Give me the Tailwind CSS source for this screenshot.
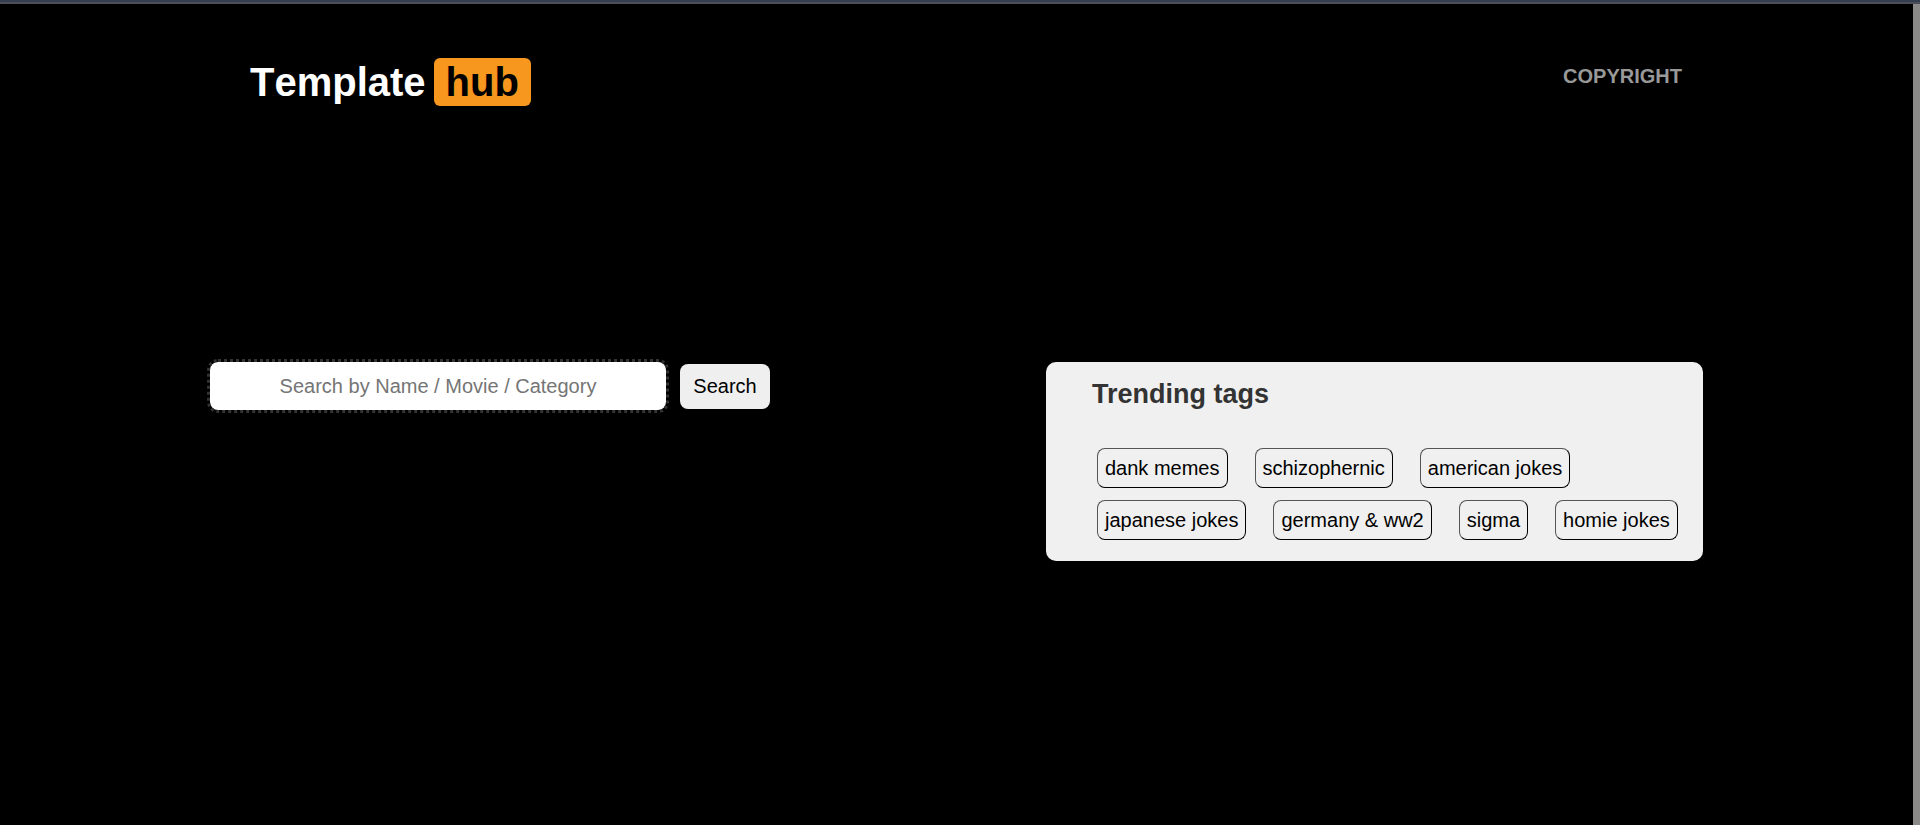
<!DOCTYPE html>
<html lang="en">
<head>
<meta charset="utf-8">
<meta name="viewport" content="width=device-width, initial-scale=1">
<title>Template hub</title>
<script src="https://cdn.jsdelivr.net/npm/@tailwindcss/browser@4"></script>
</head>
<body class="flex min-h-screen flex-col bg-black font-['Liberation_Sans',Arial,sans-serif] text-xl">
  <div class="h-1 border-t-2 border-[#343e50] bg-[#4a4f57]"></div>
  <div class="flex grow border-r-7 border-[#8b8a89]">
    <div class="grow">
      <header class="flex items-start justify-between pt-[54px] pr-[231px] pl-[250px]">
        <h1 class="flex items-center gap-2 text-[40px] leading-[46px] font-bold text-white [font-kerning:none]">
          <span>Template</span>
          <span class="rounded-md bg-[#f7971d] px-3 py-px text-black">hub</span>
        </h1>
        <nav class="pt-1">
          <a href="#copyright" class="text-xl leading-6 font-bold text-[#999999]">COPYRIGHT</a>
        </nav>
      </header>
      <main class="flex items-start justify-between gap-8 px-[210px] pt-64">
        <form class="flex items-center gap-3.5">
          <input type="text" aria-label="Search templates" placeholder="Search by Name / Movie / Category" class="h-12 w-[456px] rounded-lg bg-white text-center text-xl text-black outline-3 outline-[#333333] outline-dotted placeholder:text-[#757575]">
          <button type="submit" class="h-[45px] w-[90px] rounded-lg bg-[#efefef] text-center text-xl text-black">Search</button>
        </form>
        <section class="w-full max-w-[657px] rounded-[10px] bg-[#f0f0f0] pt-4 pr-5 pb-[21px] pl-[46px]">
          <h2 class="text-[27px] leading-8 font-bold text-[#333333]">Trending tags</h2>
          <div class="flex flex-wrap gap-x-[27px] gap-y-3 pt-[38px] pl-[5px]">
            <button type="button" class="h-10 rounded-lg border border-t-[#555555] border-r-black border-b-black border-l-[#555555] px-[7px] text-black">dank memes</button>
            <button type="button" class="h-10 rounded-lg border border-t-[#555555] border-r-black border-b-black border-l-[#555555] px-[7px] text-black">schizophernic</button>
            <button type="button" class="h-10 rounded-lg border border-t-[#555555] border-r-black border-b-black border-l-[#555555] px-[7px] text-black">american jokes</button>
            <button type="button" class="h-10 rounded-lg border border-t-[#555555] border-r-black border-b-black border-l-[#555555] px-[7px] text-black">japanese jokes</button>
            <button type="button" class="h-10 rounded-lg border border-t-[#555555] border-r-black border-b-black border-l-[#555555] px-[7px] text-black">germany &amp; ww2</button>
            <button type="button" class="h-10 rounded-lg border border-t-[#555555] border-r-black border-b-black border-l-[#555555] px-[7px] text-black">sigma</button>
            <button type="button" class="h-10 rounded-lg border border-t-[#555555] border-r-black border-b-black border-l-[#555555] px-[7px] text-black">homie jokes</button>
          </div>
        </section>
      </main>
    </div>
  </div>
</body>
</html>
